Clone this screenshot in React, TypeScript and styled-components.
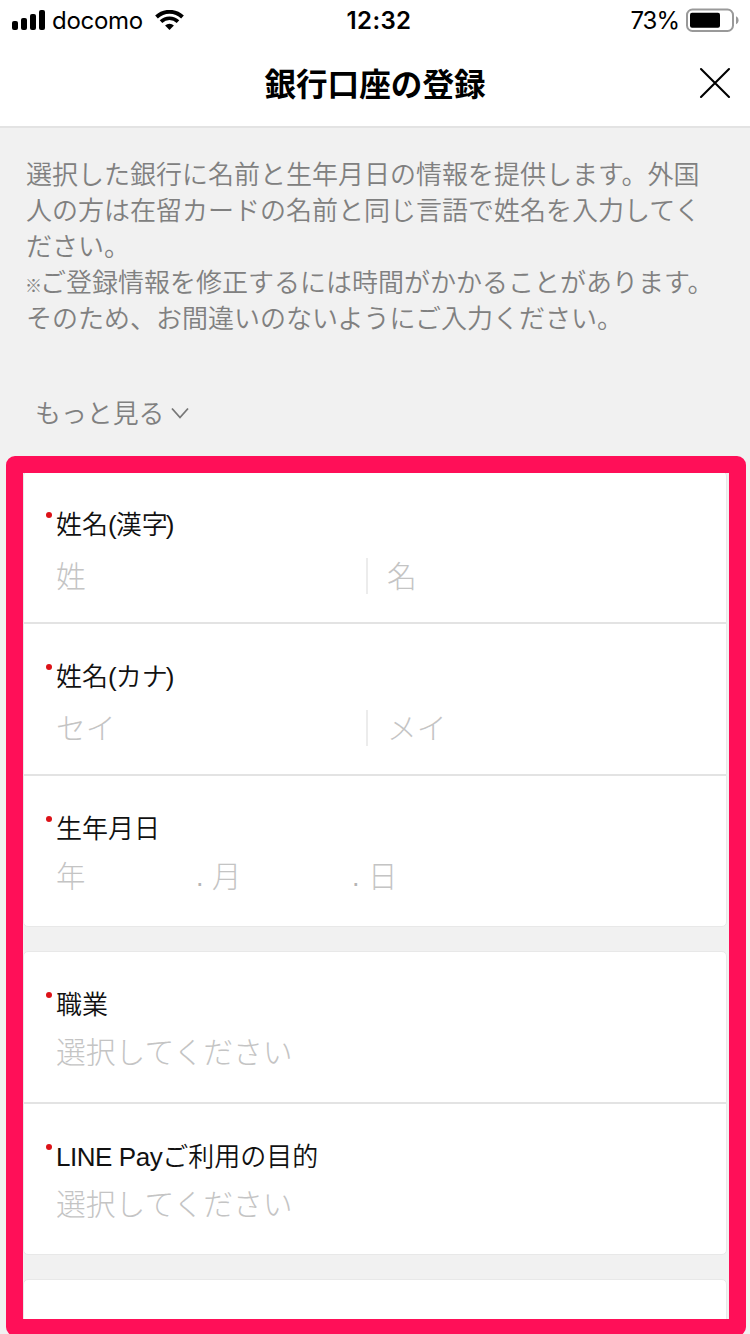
import React from 'react';
import styled, { createGlobalStyle } from 'styled-components';

const GlobalStyle = createGlobalStyle`
  *, *::before, *::after { box-sizing: border-box; }
  body {
    margin: 0;
    background: #f1f1f1;
    font-family: "Liberation Sans", "Noto Sans CJK JP", sans-serif;
    font-weight: 350;
  }
`;

const Screen = styled.div`
  position: relative;
  width: 750px;
  height: 1334px;
  overflow: hidden;
  background: #f1f1f1;
`;

const StatusBar = styled.div`
  display: grid;
  grid-template-columns: 1fr auto 1fr;
  align-items: center;
  height: 40px;
  padding: 0 11px 0 12px;
  background: #fff;
  color: #000;
  font-family: Inter, sans-serif;
  font-weight: 400;
  font-size: 24px;
  line-height: 38px;
`;

const StatusSide = styled.div<{ $end?: boolean }>`
  display: flex;
  align-items: center;
  justify-content: ${(p) => (p.$end ? 'flex-end' : 'flex-start')};
  svg { display: block; flex: none; }
`;

const Carrier = styled.span`
  margin: 0 12px 0 7px;
  padding-top: 2px;
  letter-spacing: -0.3px;
`;

const Clock = styled.span`
  font-weight: 600;
  letter-spacing: 0.4px;
  margin-left: 7px;
  padding-top: 2px;
`;

const Percent = styled.span`
  margin-right: 7px;
  padding-top: 2px;
  letter-spacing: -1px;
`;

const Header = styled.header`
  display: grid;
  grid-template-columns: 60px 1fr 60px;
  align-items: center;
  height: 88px;
  background: #fff;
  border-bottom: 2px solid #e3e3e3;
`;

const Title = styled.h1`
  grid-column: 2;
  margin: 0;
  padding-top: 4px;
  font-size: 31.6px;
  line-height: 46px;
  font-weight: 700;
  text-align: center;
  color: #000;
`;

const CloseButton = styled.button`
  padding: 0 0 0 9px;
  border: 0;
  background: none;
  svg { display: block; }
`;

const Intro = styled.section`
  height: 343px;
  padding: 29px 26px 0;
  color: #808080;
`;

const IntroText = styled.p`
  margin: 0;
  font-size: 26px;
  line-height: 36px;
  white-space: nowrap;
`;

const NoteMark = styled.span`
  display: inline-block;
  width: 15px;
  margin-left: -1px;
  font-size: 17px;
  font-weight: 700;
  line-height: 1;
`;

const MoreLink = styled.div`
  display: flex;
  align-items: center;
  gap: 7px;
  margin: 59px 0 0 9px;
  font-size: 25.9px;
  line-height: 36px;
  svg { display: block; }
`;

const Form = styled.main`
  display: flex;
  flex-direction: column;
  gap: 24px;
  padding: 0 23px;
`;

const Card = styled.section`
  background: #fff;
  border: 1px solid #e8e8e8;
  border-radius: 5px;
`;

const Row = styled.div`
  height: 150px;
  padding: 33px 20px 0 32px;
  & + & {
    height: 152px;
    border-top: 2px solid #e3e3e3;
  }
`;

const Label = styled.div`
  position: relative;
  font-size: 26px;
  line-height: 40px;
  color: #111;
  &::before {
    content: '';
    position: absolute;
    left: -10px;
    top: 7px;
    width: 6px;
    height: 6px;
    border-radius: 50%;
    background: #dc1218;
  }
`;

const Latin = styled.span`
  letter-spacing: -0.45px;
`;

const Paren = styled.span<{ $close?: boolean }>`
  letter-spacing: -1px;
  margin-left: ${(p) => (p.$close ? -2 : 0)}px;
`;

const Fields = styled.div<{ $lift?: boolean }>`
  display: flex;
  align-items: center;
  margin-top: ${(p) => (p.$lift ? 8 : 13)}px;
  font-size: 29.8px;
  font-weight: 300;
  line-height: 40px;
  color: #c4c4c4;
`;

const NameField = styled.span`
  width: 310px;
  height: 36px;
  line-height: 37px;
  & + & {
    border-left: 2px solid #ececec;
    padding-left: 19px;
  }
`;

const DateField = styled.span`
  width: 140px;
  font-size: 29.4px;
`;

const DateDot = styled.span`
  width: 16px;
  font-size: 27px;
  color: #b5b5b5;
`;

const Highlight = styled.div`
  position: absolute;
  left: 6px;
  top: 456px;
  width: 740px;
  height: 880px;
  border: 17.5px solid #ff0f58;
  border-radius: 9px;
  pointer-events: none;
`;

const SignalIcon = () => (
  <svg width="33" height="20" viewBox="0 0 33 20">
    <rect x="0" y="11" width="6" height="9" rx="2" />
    <rect x="9" y="8" width="6" height="12" rx="2" />
    <rect x="18" y="4" width="6" height="16" rx="2" />
    <rect x="27" y="0" width="6" height="20" rx="2" />
  </svg>
);

const WifiIcon = () => (
  <svg width="29" height="20" viewBox="0 0 29 20">
    <path d="M1.5 7a18.8 18.8 0 0 1 26 0" fill="none" stroke="#000" strokeWidth="3.9" />
    <path d="M6 11.7a12.2 12.2 0 0 1 17 0" fill="none" stroke="#000" strokeWidth="3.7" />
    <path d="M14.5 20l-4.4-4.4a6.4 6.4 0 0 1 8.8 0z" />
  </svg>
);

const BatteryIcon = () => (
  <svg width="53" height="24" viewBox="0 0 53 24">
    <rect x="1" y="1.5" width="46" height="21.5" rx="5.5" fill="none" stroke="#999" strokeWidth="2" />
    <rect x="4" y="4.8" width="30" height="15" rx="2" />
    <path d="M50 8.2c3.4 1.3 3.4 6.7 0 8z" fill="#999" />
  </svg>
);

const CloseIcon = () => (
  <svg width="32" height="32" viewBox="0 0 32 32">
    <path d="M2 2L30 30M30 2L2 30" stroke="#000" strokeWidth="2.1" strokeLinecap="round" />
  </svg>
);

const ChevronIcon = () => (
  <svg width="18" height="14" viewBox="0 0 18 14" fill="none">
    <path d="M1 1.5L9 10.5L17 1.5" stroke="#777" strokeWidth="1.8" />
  </svg>
);

const NameRow = ({ script, family, given }: { script: string; family: string; given: string }) => (
  <Row>
    <Label>
      姓名<Paren>(</Paren>{script}<Paren $close>)</Paren>
    </Label>
    <Fields>
      <NameField>{family}</NameField>
      <NameField>{given}</NameField>
    </Fields>
  </Row>
);

const SelectRow = ({ label }: { label: React.ReactNode }) => (
  <Row>
    <Label>{label}</Label>
    <Fields $lift>選択してください</Fields>
  </Row>
);

export default function App() {
  return (
    <Screen>
      <GlobalStyle />
      <StatusBar>
        <StatusSide>
          <SignalIcon />
          <Carrier>docomo</Carrier>
          <WifiIcon />
        </StatusSide>
        <Clock>12:32</Clock>
        <StatusSide $end>
          <Percent>73%</Percent>
          <BatteryIcon />
        </StatusSide>
      </StatusBar>
      <Header>
        <Title>銀行口座の登録</Title>
        <CloseButton aria-label="閉じる">
          <CloseIcon />
        </CloseButton>
      </Header>
      <Intro>
        <IntroText>
          選択した銀行に名前と生年月日の情報を提供します。外国
          <br />
          人の方は在留カードの名前と同じ言語で姓名を入力してく
          <br />
          ださい。
          <br />
          <NoteMark>※</NoteMark>ご登録情報を修正するには時間がかかることがあります。
          <br />
          そのため、お間違いのないようにご入力ください。
        </IntroText>
        <MoreLink>
          もっと見る
          <ChevronIcon />
        </MoreLink>
      </Intro>
      <Form>
        <Card>
          <NameRow script="漢字" family="姓" given="名" />
          <NameRow script="カナ" family="セイ" given="メイ" />
          <Row>
            <Label>生年月日</Label>
            <Fields $lift>
              <DateField>年</DateField>
              <DateDot>.</DateDot>
              <DateField>月</DateField>
              <DateDot>.</DateDot>
              <DateField>日</DateField>
            </Fields>
          </Row>
        </Card>
        <Card>
          <SelectRow label="職業" />
          <SelectRow label={<><Latin>LINE Pay</Latin>ご利用の目的</>} />
        </Card>
        <Card>
          <Row />
        </Card>
      </Form>
      <Highlight />
    </Screen>
  );
}
